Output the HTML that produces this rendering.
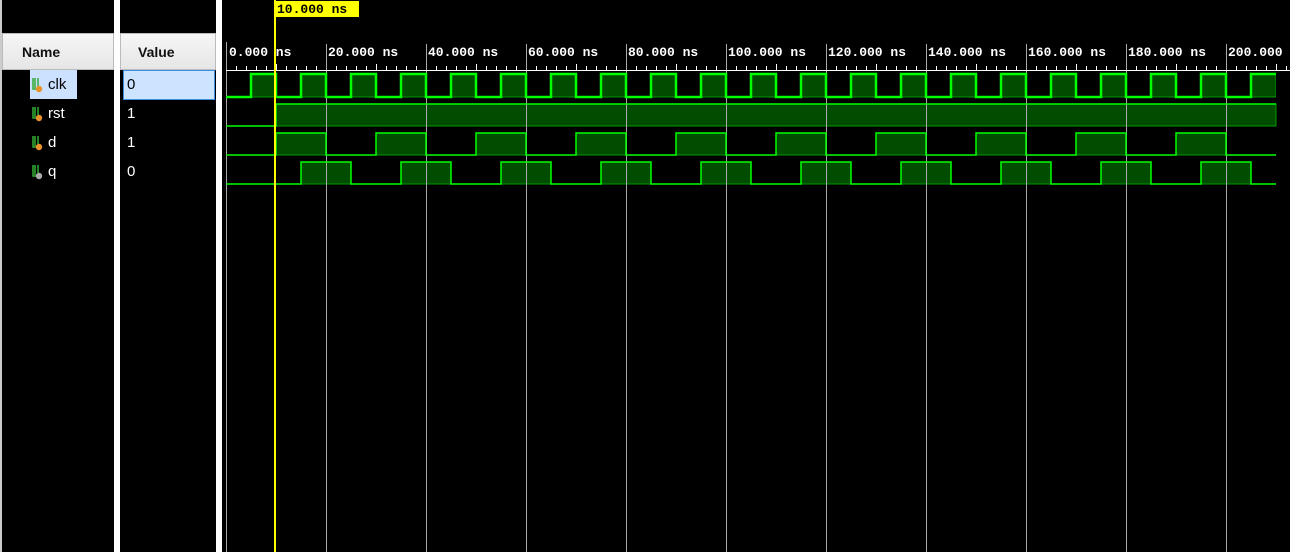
<!DOCTYPE html><html><head><style>
body{margin:0;width:1290px;height:552px;background:#000;overflow:hidden;position:relative;font-family:"Liberation Sans",sans-serif}
.a{position:absolute}
.hd{background:linear-gradient(#f6f6f6,#e6e6e6);border:1px solid #bbb;box-sizing:border-box;font-weight:bold;font-size:14px;color:#111;top:33px;height:37px;line-height:36px}
.nm{color:#fff;font-size:15px;left:48px}
.vl{color:#fff;font-size:15px;left:127px}
</style></head><body>
<div class="a" style="left:0;top:0;width:2px;height:552px;background:#ccc"></div>
<div class="a" style="left:114px;top:0;width:6px;height:552px;background:#fff"></div>
<div class="a" style="left:216px;top:0;width:6px;height:552px;background:#fff"></div>
<div class="a hd" style="left:2px;width:112px;padding-left:19px">Name</div>
<div class="a hd" style="left:120px;width:96px;padding-left:17px">Value</div>
<div class="a" style="left:30px;top:70px;width:47px;height:29px;background:#cce0ff"></div>
<div class="a" style="left:123px;top:70px;width:90px;height:28px;background:#cce4ff;border:1px solid #3c8ee0"></div>
<svg class="a" style="left:30px;top:76px" width="20" height="120">
<g fill="none" stroke="#3a3" stroke-width="1.5">
<path d="M3 2V13H8M8 2V10M5 2V12"/><path d="M3 31V42H8M8 31V39M5 31V41"/><path d="M3 60V71H8M8 60V68M5 60V70"/><path d="M3 89V100H8M8 89V97M5 89V99"/></g>
<circle cx="9" cy="13" r="3.2" fill="#e8902a"/><circle cx="9" cy="42" r="3.2" fill="#e8902a"/><circle cx="9" cy="71" r="3.2" fill="#e8902a"/><circle cx="9" cy="100" r="3.2" fill="#aaa"/>
</svg>
<div class="a nm" style="top:76px;color:#000">clk</div>
<div class="a nm" style="top:105px">rst</div>
<div class="a nm" style="top:134px">d</div>
<div class="a nm" style="top:163px">q</div>
<div class="a vl" style="top:76px;color:#000">0</div>
<div class="a vl" style="top:105px">1</div>
<div class="a vl" style="top:134px">1</div>
<div class="a vl" style="top:163px">0</div>
<svg class="a" style="left:0;top:0" width="1290" height="552">
<defs>
<pattern id="pc" patternUnits="userSpaceOnUse" x="251" y="0" width="50" height="552"><rect x="0" y="74" width="25" height="23" fill="#004d00" stroke="#009900" stroke-width="1"/></pattern>
<pattern id="pd" patternUnits="userSpaceOnUse" x="276" y="0" width="100" height="552"><rect x="0" y="133" width="50" height="22" fill="#004d00" stroke="#009900"/></pattern>
<pattern id="pq" patternUnits="userSpaceOnUse" x="301" y="0" width="100" height="552"><rect x="0" y="162" width="50" height="22" fill="#004d00" stroke="#009900"/></pattern>
</defs>
<rect x="251" y="73" width="1025" height="25" fill="url(#pc)"/>
<rect x="276" y="104" width="1000" height="22" fill="#004d00" stroke="#009900"/>
<rect x="276" y="132" width="950" height="24" fill="url(#pd)"/>
<rect x="301" y="161" width="950" height="24" fill="url(#pq)"/>
<g stroke="#aaa" stroke-width="1">
<path d="M226.5 42V552M326.5 44V552M426.5 44V552M526.5 44V552M626.5 44V552M726.5 44V552M826.5 44V552M926.5 44V552M1026.5 44V552M1126.5 44V552M1226.5 44V552"/>
</g>
<path d="M226 70.5H1290" stroke="#fff"/>
<path d="M236.5 66V70M246.5 66V70M256.5 66V70M266.5 66V70M276.5 64V70M286.5 66V70M296.5 66V70M306.5 66V70M316.5 66V70" stroke="#fff" id="tk"/>
<g stroke="#fff">
<use href="#tk" x="100"/><use href="#tk" x="200"/><use href="#tk" x="300"/><use href="#tk" x="400"/><use href="#tk" x="500"/><use href="#tk" x="600"/><use href="#tk" x="700"/><use href="#tk" x="800"/><use href="#tk" x="900"/><use href="#tk" x="1000"/>
</g>
<g font-family="Liberation Mono,monospace" font-weight="bold" font-size="13" fill="#fff">
<text x="229" y="56">0.000 ns</text><text x="328" y="56">20.000 ns</text><text x="428" y="56">40.000 ns</text><text x="528" y="56">60.000 ns</text><text x="628" y="56">80.000 ns</text><text x="728" y="56">100.000 ns</text><text x="828" y="56">120.000 ns</text><text x="928" y="56">140.000 ns</text><text x="1028" y="56">160.000 ns</text><text x="1128" y="56">180.000 ns</text><text x="1228" y="56">200.000</text>
</g>
<g fill="none" stroke="#00ff00">
<path stroke-width="2.5" d="M226 97H251V74H276V97H301V74H326V97H351V74H376V97H401V74H426V97H451V74H476V97H501V74H526V97H551V74H576V97H601V74H626V97H651V74H676V97H701V74H726V97H751V74H776V97H801V74H826V97H851V74H876V97H901V74H926V97H951V74H976V97H1001V74H1026V97H1051V74H1076V97H1101V74H1126V97H1151V74H1176V97H1201V74H1226V97H1251V74H1276"/>
<path stroke-width="1.5" d="M226 126H276V104H1276"/>
<path stroke-width="1.5" d="M226 155H276V133H326V155H376V133H426V155H476V133H526V155H576V133H626V155H676V133H726V155H776V133H826V155H876V133H926V155H976V133H1026V155H1076V133H1126V155H1176V133H1226V155H1276"/>
<path stroke-width="1.5" d="M226 184H301V162H351V184H401V162H451V184H501V162H551V184H601V162H651V184H701V162H751V184H801V162H851V184H901V162H951V184H1001V162H1051V184H1101V162H1151V184H1201V162H1251V184H1276"/>
</g>
<rect x="274" y="0" width="2" height="552" fill="#ffff00"/>
<rect x="275" y="1" width="84" height="16" fill="#ffff00"/>
<text x="277" y="13" font-family="Liberation Mono,monospace" font-weight="bold" font-size="13" fill="#000">10.000 ns</text>
</svg>
</body></html>
